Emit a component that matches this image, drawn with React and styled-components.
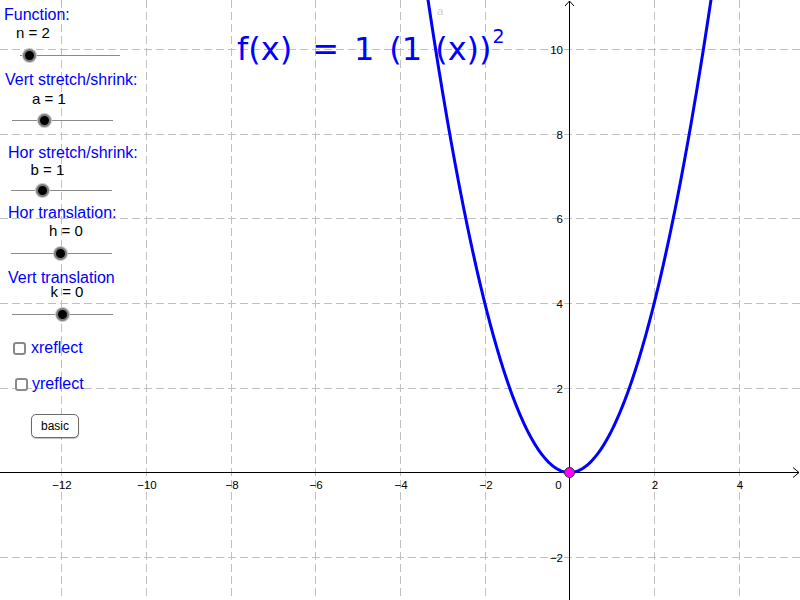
import React from 'react'
import styled, { createGlobalStyle } from 'styled-components'

// graph view: origin and pixels per unit
const S = 42.35
const OX = 569.5
const OY = 472.5

const xLines = [-12, -10, -8, -6, -4, -2, 2, 4]
const yLines = [10, 8, 6, 4, 2, -2]

const fmt = (n) => (n < 0 ? '\u2212' + Math.abs(n) : String(n))

const parabola = () => {
  const pts = []
  for (let X = 410; X <= 730; X += 1) {
    const u = (X - OX) / S
    pts.push(`${X},${(OY - u * u * S).toFixed(2)}`)
  }
  return 'M' + pts.join(' L')
}

// slider groups of the left panel, in the order GeoGebra shows them
const groups = [
  { id: 'n', caption: 'Function:', top: 7.5, cx: 4, label: 'n = 2', lgap: 5.8, lx: 16, tgap: 9.7, x: 20, w: 100, knob: 9 },
  { id: 'a', caption: 'Vert stretch/shrink:', top: 11, cx: 5, label: 'a = 1', lgap: 5.8, lx: 32, tgap: 9.2, x: 12, w: 101, knob: 32 },
  { id: 'b', caption: 'Hor stretch/shrink:', top: 19, cx: 8, label: 'b = 1', lgap: 3.8, lx: 30.5, tgap: 8.2, x: 11, w: 101, knob: 31.7 },
  { id: 'h', caption: 'Hor translation:', top: 9.5, cx: 8, label: 'h = 0', lgap: 5, lx: 49, tgap: 9.5, x: 11, w: 101, knob: 49.7 },
  { id: 'k', caption: 'Vert translation', top: 11.5, cx: 8, label: 'k = 0', lgap: 0.3, lx: 50.5, tgap: 10.2, x: 12, w: 101, knob: 50.3 },
]

const GlobalStyle = createGlobalStyle`
  html, body {
    margin: 0;
    padding: 0;
    background: #fff;
    overflow: hidden;
  }
`

const Applet = styled.div`
  position: relative;
  width: 800px;
  height: 600px;
  overflow: hidden;
  background: #fff;
  font-family: "Liberation Sans", Arial, sans-serif;
`

const GraphSvg = styled.svg`
  display: block;
`

const TickText = styled.text`
  font-family: "Liberation Sans", Arial, sans-serif;
  font-size: 11.5px;
  fill: ${(p) => p.$faint ? '#cfcfcf' : '#000'};
`

const Formula = styled.div`
  position: absolute;
  left: 237px;
  top: 33px;
  font-family: "DejaVu Sans", sans-serif;
  font-size: 32px;
  line-height: 32px;
  color: #0000ff;
  white-space: nowrap;
`

const Piece = styled.span`
  margin-left: ${(p) => p.$gap || 0}px;
`

const Sup = styled.span`
  font-size: 19px;
  line-height: 0;
  vertical-align: 17px;
  margin-left: 1px;
`

const Panel = styled.div`
  position: absolute;
  left: 0;
  top: 0;
  display: flex;
  flex-direction: column;
  align-items: flex-start;
`

const Group = styled.div`
  display: flex;
  flex-direction: column;
  align-items: flex-start;
  margin-top: ${(p) => p.$top}px;
`

const Caption = styled.div`
  margin-left: ${(p) => p.$indent}px;
  font-size: 16px;
  line-height: 14px;
  color: #0000ff;
  white-space: nowrap;
`

const ValueLabel = styled.div`
  margin-top: ${(p) => p.$gap}px;
  margin-left: ${(p) => p.$indent}px;
  font-size: 15px;
  line-height: 12px;
  color: #000;
  white-space: nowrap;
`

const Track = styled.div`
  position: relative;
  margin-top: ${(p) => p.$gap}px;
  margin-left: ${(p) => p.$indent}px;
  width: ${(p) => p.$w}px;
  height: 13px;

  &::before {
    content: "";
    position: absolute;
    left: 0;
    right: 0;
    top: 6px;
    height: 1px;
    background: #8a8a8a;
  }
`

const Knob = styled.span`
  position: absolute;
  top: 0;
  width: 9px;
  height: 9px;
  margin-left: -6.5px;
  border-radius: 50%;
  background: #000;
  border: 2px solid #7a7a7a;
  box-shadow: 0 0 0 1px #c6c6c6;
`

const CheckRow = styled.label`
  display: flex;
  align-items: center;
  gap: ${(p) => p.$gap}px;
  margin-top: ${(p) => p.$top}px;
  margin-left: ${(p) => p.$indent}px;
  height: 16px;
  font-size: 16px;
  line-height: 16px;
  color: #0000ff;
  cursor: pointer;
`

const Box = styled.span`
  width: 13px;
  height: 13px;
  box-sizing: border-box;
  border: 2px solid #8a8a8a;
  border-radius: 3px;
  background: #fff;
`

const BasicButton = styled.button`
  margin-top: 21.5px;
  margin-left: 31px;
  width: 48px;
  height: 24px;
  padding: 0;
  box-sizing: border-box;
  border: 1.5px solid #6a6a6a;
  border-radius: 5px;
  background: #fff;
  box-shadow: 0 1px 1px rgba(0, 0, 0, 0.25);
  font-family: "Liberation Sans", Arial, sans-serif;
  font-size: 12px;
  color: #000;
  cursor: pointer;
`

const Graph = () => (
  <GraphSvg width="800" height="600" viewBox="0 0 800 600">
    <g stroke="#c0c0c0" strokeWidth="1" strokeDasharray="8 4">
      {xLines.map((v) => {
        const X = Math.round(OX + v * S) + 0.5
        return <line key={'gx' + v} x1={X} y1="0" x2={X} y2="600" />
      })}
      {yLines.map((v) => {
        const Y = Math.round(OY - v * S) + 0.5
        return <line key={'gy' + v} x1="0" y1={Y} x2="800" y2={Y} />
      })}
    </g>

    <g stroke="#000" strokeWidth="1" fill="none">
      <line x1="0" y1={OY} x2="799" y2={OY} />
      <polyline points={`793,${OY - 5} 799,${OY} 793,${OY + 5}`} />
      <line x1={OX} y1="600" x2={OX} y2="1" />
      <polyline points={`${OX - 4.5},6 ${OX},1 ${OX + 4.5},6`} />
    </g>

    {xLines.map((v) => (
      <TickText key={'tx' + v} x={Math.round(OX + v * S) + 1} y="488.5" textAnchor="middle">
        {fmt(v)}
      </TickText>
    ))}
    <TickText x="558.5" y="488.5" textAnchor="middle">0</TickText>
    {yLines.map((v) => (
      <TickText key={'ty' + v} x="563" y={Math.round(OY - v * S) + 5} textAnchor="end">
        {fmt(v)}
      </TickText>
    ))}

    <TickText $faint x="437" y="15">a</TickText>

    <path d={parabola()} fill="none" stroke="#0000ff" strokeWidth="3" strokeLinejoin="round" />
    <circle cx={OX} cy={OY} r="5" fill="#ff00ff" stroke="#333" strokeWidth="1" />
  </GraphSvg>
)

export default function App() {
  return (
    <>
      <GlobalStyle />
      <Applet>
        <Graph />

        <Formula>
          <Piece>f(x)</Piece>
          <Piece $gap={20}>=</Piece>
          <Piece $gap={15}>1</Piece>
          <Piece $gap={15}>(1</Piece>
          <Piece $gap={13}>(x))</Piece>
          <Sup>2</Sup>
        </Formula>

        <Panel>
          {groups.map((g) => (
            <Group key={g.id} $top={g.top}>
              <Caption $indent={g.cx}>{g.caption}</Caption>
              <ValueLabel $gap={g.lgap} $indent={g.lx}>{g.label}</ValueLabel>
              <Track $gap={g.tgap} $indent={g.x} $w={g.w}>
                <Knob style={{ left: g.knob }} />
              </Track>
            </Group>
          ))}

          <CheckRow $top={19.5} $indent={13} $gap={5}>
            <Box />
            xreflect
          </CheckRow>
          <CheckRow $top={20} $indent={15} $gap={4}>
            <Box />
            yreflect
          </CheckRow>

          <BasicButton>basic</BasicButton>
        </Panel>
      </Applet>
    </>
  )
}
